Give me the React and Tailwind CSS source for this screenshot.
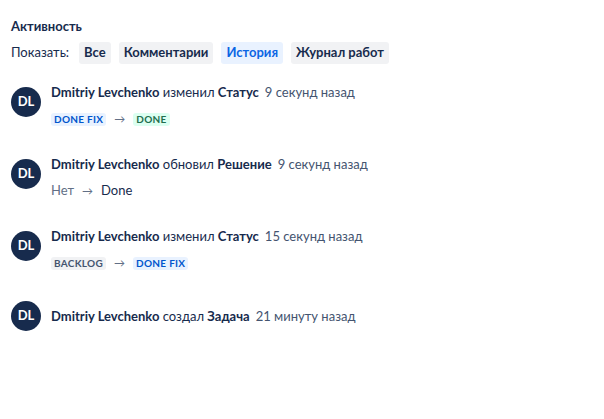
const filters = [
  { label: 'Все' },
  { label: 'Комментарии' },
  { label: 'История', active: true },
  { label: 'Журнал работ' },
];

const lozengeStyles = {
  blue: 'bg-[#e9f2ff] text-[#0055cc]',
  green: 'bg-[#dcfff1] text-[#216e4e]',
  gray: 'bg-[#f1f2f4] text-[#44546f]',
};

function Lozenge({ tone, children }) {
  return (
    <span className={`inline-flex items-center h-[13px] px-[3px] rounded-[3px] text-[10px] font-bold uppercase tracking-[0.03em] leading-none ${lozengeStyles[tone]}`}>
      {children}
    </span>
  );
}

function Arrow() {
  return <span className="mx-[8px] text-[11px] text-[#626f86]">→</span>;
}

function Entry({ action, field, time, children }) {
  return (
    <div className={`flex gap-[10px] ${children ? 'items-start' : 'items-center'}`}>
      <div className={`${children ? 'mt-[4px]' : ''} w-[30px] h-[30px] shrink-0 rounded-full bg-[#172b4d] text-white flex items-center justify-center text-[13px] font-bold`}>
        DL
      </div>
      <div className="flex flex-col">
        <div className="text-[13px] leading-[18px] text-[#172b4d]">
          <span className="font-bold">Dmitriy Levchenko</span> {action}{' '}
          <span className="font-bold">{field}</span>
          <span className="ml-[6px] text-[#44546f]">{time}</span>
        </div>
        {children && <div className="mt-[9px] flex items-center h-[18px]">{children}</div>}
      </div>
    </div>
  );
}

export default function App() {
  return (
    <div className="w-[604px] h-[419px] bg-white px-[11px] pt-[18px] font-['Lato',sans-serif] text-[#172b4d]">
      <h2 className="text-[13px] font-bold leading-[16px]">Активность</h2>
      <div className="mt-[8px] flex items-center gap-[8px] text-[13px]">
        <span className="text-[#172b4d] mr-[2px]">Показать:</span>
        {filters.map((f) => (
          <button
            key={f.label}
            className={`h-[22px] px-[5px] rounded-[3px] font-bold ${f.active ? 'bg-[#e9f2ff] text-[#0c66e4]' : 'bg-[#f1f2f4] text-[#172b4d]'}`}
          >
            {f.label}
          </button>
        ))}
      </div>
      <div className="mt-[19px] flex flex-col gap-[27px]">
        <Entry action="изменил" field="Статус" time="9 секунд назад">
          <Lozenge tone="blue">Done fix</Lozenge>
          <Arrow />
          <Lozenge tone="green">Done</Lozenge>
        </Entry>
        <Entry action="обновил" field="Решение" time="9 секунд назад">
          <span className="text-[13px] text-[#626f86]">Нет</span>
          <Arrow />
          <span className="text-[13px] text-[#172b4d]">Done</span>
        </Entry>
        <Entry action="изменил" field="Статус" time="15 секунд назад">
          <Lozenge tone="gray">Backlog</Lozenge>
          <Arrow />
          <Lozenge tone="blue">Done fix</Lozenge>
        </Entry>
        <div className="mt-[2px]">
          <Entry action="создал" field="Задача" time="21 минуту назад" />
        </div>
      </div>
    </div>
  );
}
